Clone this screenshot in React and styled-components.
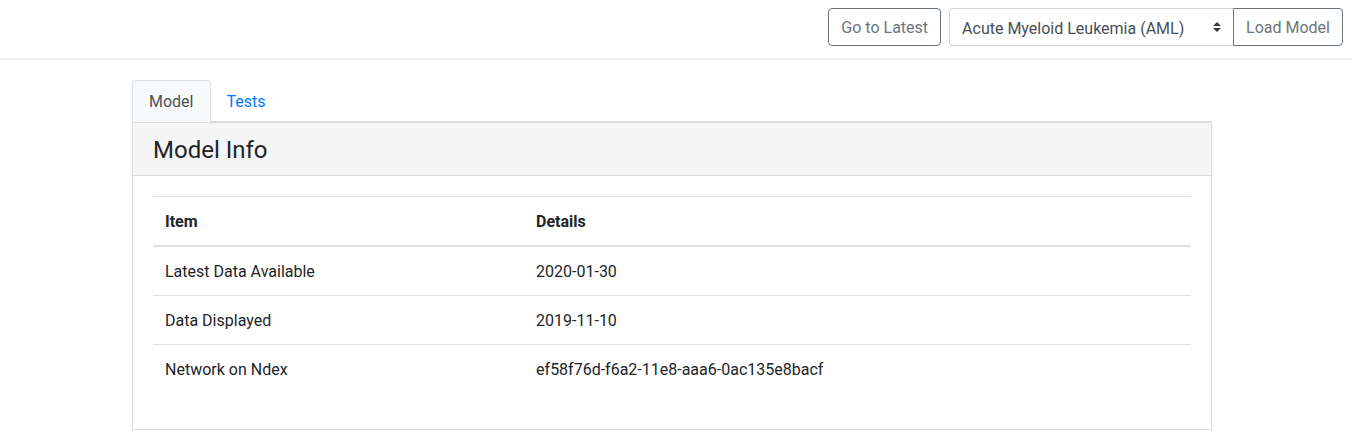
import styled, { createGlobalStyle } from 'styled-components'
import { useState } from 'react'

const Global = createGlobalStyle`
  body {
    margin: 0;
    font-family: Roboto, "Liberation Sans", sans-serif;
    font-size: 16px;
    line-height: 1.5;
    color: #212529;
    background: #fff;
  }
  * { box-sizing: border-box; }
`

const rows = [
  ['Latest Data Available', '2020-01-30'],
  ['Data Displayed', '2019-11-10'],
  ['Network on Ndex', 'ef58f76d-f6a2-11e8-aaa6-0ac135e8bacf'],
]

const App = () => {
  const [tab, setTab] = useState('model')
  return (
    <>
      <Global />
      <Navbar>
        <OutlineButton>Go to Latest</OutlineButton>
        <InputGroup>
          <Select defaultValue="aml">
            <option value="aml">Acute Myeloid Leukemia (AML)</option>
          </Select>
          <OutlineButton $attached>Load Model</OutlineButton>
        </InputGroup>
      </Navbar>
      <Container>
        <Tabs>
          <Tab $active={tab === 'model'} onClick={() => setTab('model')}>Model</Tab>
          <Tab $active={tab === 'tests'} onClick={() => setTab('tests')}>Tests</Tab>
        </Tabs>
        <Card>
          <CardHeader>
            <Title>Model Info</Title>
          </CardHeader>
          <CardBody>
            <Table>
              <thead>
                <tr>
                  <Th style={{ width: '35.75%' }}>Item</Th>
                  <Th>Details</Th>
                </tr>
              </thead>
              <tbody>
                {rows.map(([item, detail]) => (
                  <tr key={item}>
                    <Td>{item}</Td>
                    <Td>{detail}</Td>
                  </tr>
                ))}
              </tbody>
            </Table>
          </CardBody>
        </Card>
      </Container>
    </>
  )
}

const Navbar = styled.nav`
  display: flex;
  justify-content: flex-end;
  align-items: center;
  gap: 8px;
  height: 58px;
  padding: 0 9px 4px 0;
  background: #fff;
  box-shadow: 0 1px 3px rgba(0, 0, 0, 0.12);
  position: relative;
`

const OutlineButton = styled.button`
  font-family: inherit;
  font-size: 16px;
  line-height: 24px;
  height: 38px;
  padding: 7px 12px 5px;
  color: #6c757d;
  background: transparent;
  border: 1px solid #6c757d;
  border-radius: ${p => (p.$attached ? '0 4px 4px 0' : '4px')};
  cursor: pointer;
`

const InputGroup = styled.div`
  display: flex;
`

const Select = styled.select`
  width: 284px;
  height: 38px;
  padding: 7px 28px 5px 12px;
  font-family: inherit;
  font-size: 16px;
  color: #495057;
  border: 1px solid #ced4da;
  border-right: none;
  border-radius: 4px 0 0 4px;
  appearance: none;
  background: #fff url("data:image/svg+xml,%3csvg xmlns='http://www.w3.org/2000/svg' width='4' height='5' viewBox='0 0 4 5'%3e%3cpath fill='%23343a40' d='M2 0L0 2h4zm0 5L0 3h4z'/%3e%3c/svg%3e") no-repeat right 12px center / 8px 10px;
`

const Container = styled.main`
  width: 1080px;
  margin: 22px 0 0 132px;
`

const Tabs = styled.div`
  display: flex;
`

const Tab = styled.button`
  font-family: inherit;
  font-size: 16px;
  line-height: 24px;
  height: 42px;
  padding: 8px 16px;
  margin-right: -1px;
  background: ${p => (p.$active ? '#f8f9fa' : 'transparent')};
  color: ${p => (p.$active ? '#495057' : '#007bff')};
  border: 1px solid ${p => (p.$active ? '#dee2e6' : 'transparent')};
  border-bottom: none;
  border-radius: 4px 4px 0 0;
  cursor: pointer;
`

const Card = styled.section`
  border: 1px solid #ddd;
  border-top: 2px solid #ddd;
  border-radius: 2px;
  box-shadow: 0 1px 2px rgba(0, 0, 0, 0.1);
  margin-top: -1px;
  height: 309px;
`

const CardHeader = styled.div`
  background: #f5f5f5;
  border-bottom: 1px solid #ddd;
  padding: 13px 20px 11px;
`

const Title = styled.h3`
  margin: 0;
  font-size: 24px;
  font-weight: 400;
  line-height: 28px;
`

const CardBody = styled.div`
  padding: 20px;
`

const Table = styled.table`
  width: 100%;
  border-collapse: collapse;
  margin-bottom: 16px;
`

const Th = styled.th`
  text-align: left;
  font-weight: 700;
  padding: 13px 12px 11px;
  border-top: 1px solid #dee2e6;
  border-bottom: 2px solid #dee2e6;
`

const Td = styled.td`
  padding: 13px 12px 11px;
  border-top: 1px solid #dee2e6;
`

export default App
